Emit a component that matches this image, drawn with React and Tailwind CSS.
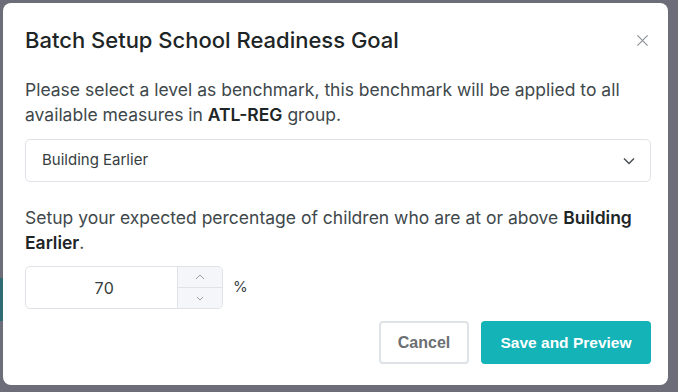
import React from "react";

export default function App() {
  return (
    <div className="relative w-[678px] h-[392px] bg-[#6c6d79] overflow-hidden" style={{ fontFamily: "Inter, 'Noto Sans', sans-serif" }}>
      <div className="absolute left-0 top-[278px] w-[4px] h-[43px] bg-[#2f6b73]" />
      <div className="absolute left-[3px] top-[3px] w-[665px] h-[382px] bg-white rounded-[8px] pl-[22px] pr-[17px] pt-[22px]">
        <div className="flex items-center justify-between h-[30px]">
          <h2 className="text-[22px] leading-[30px] font-medium text-[#1d2526]">Batch Setup School Readiness Goal</h2>
          <button className="mr-[2px] text-[#8e9398]">
            <svg width="13" height="13" viewBox="0 0 14 14" fill="none" stroke="currentColor" strokeWidth="1.3">
              <path d="M1.5 1.5 L12.5 12.5 M12.5 1.5 L1.5 12.5" />
            </svg>
          </button>
        </div>
        <p className="mt-[22px] text-[17.5px] leading-[25px] text-[#40484b]">
          Please select a level as benchmark, this benchmark will be applied to all available measures in <span className="font-semibold text-[#1d2526]">ATL-REG</span> group.
        </p>
        <div className="mt-[12px] h-[43px] w-full border border-[#dfe2e6] rounded-[5px] flex items-center justify-between pl-[16px] pr-[14px]">
          <span className="text-[15px] text-[#363d40]">Building Earlier</span>
          <svg width="14" height="14" viewBox="0 0 14 14" fill="none" stroke="#4a5053" strokeWidth="1.5">
            <path d="M2 4.5 L7 9.5 L12 4.5" />
          </svg>
        </div>
        <p className="mt-[23px] text-[17.5px] leading-[25px] text-[#40484b]">
          Setup your expected percentage of children who are at or above <span className="font-semibold text-[#1d2526]">Building Earlier</span>.
        </p>
        <div className="mt-[11px] flex items-center">
          <div className="w-[198px] h-[43px] border border-[#dfe2e6] rounded-[5px] flex overflow-hidden">
            <div className="flex-1 flex items-center justify-center pl-[6px] text-[16px] text-[#363d40] tracking-[0.5px]">70</div>
            <div className="w-[45px] border-l border-[#dfe2e6] bg-[#f5f6f9] flex flex-col">
              <div className="flex-1 flex items-center justify-center border-b border-[#dfe2e6]">
                <svg width="10" height="6" viewBox="0 0 10 6" fill="none" stroke="#9aa0a6" strokeWidth="1"><path d="M1 5 L5 1 L9 5" /></svg>
              </div>
              <div className="flex-1 flex items-center justify-center">
                <svg width="8" height="5" viewBox="0 0 8 5" fill="none" stroke="#9aa0a6" strokeWidth="1"><path d="M1 1 L4 4 L7 1" /></svg>
              </div>
            </div>
          </div>
          <span className="ml-[10px] text-[15px] text-[#3c4447]">%</span>
        </div>
        <div className="mt-[12px] flex justify-end gap-[12px]" style={{ fontFamily: "'Liberation Sans', Arial, sans-serif" }}>
          <button className="w-[90px] h-[43px] border-2 border-[#dfe3e8] rounded-[4px] text-[16px] font-bold text-[#6b6f73]">Cancel</button>
          <button className="w-[170px] h-[43px] bg-[#13b3b8] rounded-[4px] text-[15.5px] font-bold text-white">Save and Preview</button>
        </div>
      </div>
    </div>
  );
}
